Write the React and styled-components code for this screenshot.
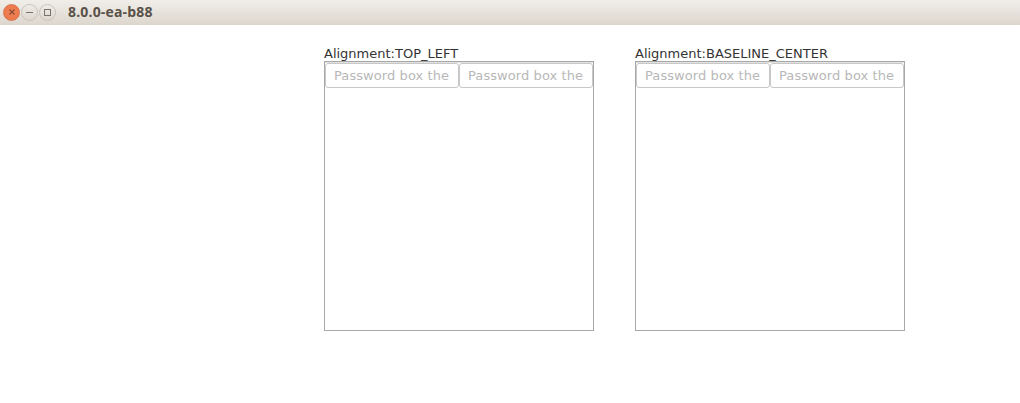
import React from "react";
import styled, { createGlobalStyle } from "styled-components";

const Global = createGlobalStyle`
  html, body {
    margin: 0;
    padding: 0;
    background: #fff;
    overflow: hidden;
  }
`;

const Window = styled.div`
  width: 1020px;
  height: 403px;
  display: flex;
  flex-direction: column;
  background: #fff;
`;

const TitleBar = styled.div`
  height: 25px;
  display: flex;
  align-items: center;
  padding-left: 3px;
  background: linear-gradient(#f1eeea, #dcd6cd);
  box-sizing: border-box;
`;

const Controls = styled.div`
  display: flex;
  gap: 1px;
  width: 65px;
  margin-bottom: 1px;
`;

const WinButton = styled.div`
  width: 17px;
  height: 17px;
  border-radius: 50%;
  display: flex;
  align-items: center;
  justify-content: center;
  background: ${(p) =>
    p.$close
      ? "radial-gradient(circle at 50% 45%, #ef8358, #ec7446)"
      : "linear-gradient(#efece8, #dcd7cf)"};
  border: 1px solid ${(p) => (p.$close ? "#d5774f" : "#c9c3ba")};
  box-sizing: border-box;
`;

const Title = styled.span`
  font-family: "Open Sans", sans-serif;
  font-weight: bold;
  font-size: 14px;
  letter-spacing: 0.17px;
  color: #5a5148;
  margin-bottom: 2px;
`;

const Content = styled.div`
  display: flex;
  gap: 41px;
  padding: 21px 0 0 324px;
`;

const Column = styled.div`
  display: flex;
  flex-direction: column;
`;

const Label = styled.div`
  font-family: "DejaVu Sans", sans-serif;
  font-size: 13px;
  line-height: 15px;
  color: #333;
  white-space: nowrap;
`;

const Pane = styled.div`
  width: 270px;
  height: 270px;
  box-sizing: border-box;
  border: 1px solid #a8a8a8;
  box-shadow: inset 0 1px 0 #e2e2e2;
  display: flex;
  align-items: flex-start;
  padding-top: 1px;
`;

const PasswordBox = styled.div`
  width: 134px;
  height: 25px;
  flex: none;
  box-sizing: border-box;
  border: 1px solid #c8c8c8;
  border-radius: 3px;
  padding-left: 8px;
  font-family: "DejaVu Sans", sans-serif;
  font-size: 13px;
  letter-spacing: 0.08px;
  line-height: 23px;
  color: #b8b8b8;
  white-space: nowrap;
  overflow: hidden;
`;

const columns = ["TOP_LEFT", "BASELINE_CENTER"];

export default function App() {
  return (
    <Window>
      <Global />
      <TitleBar>
        <Controls>
          <WinButton $close>
            <svg width="8" height="8" viewBox="0 0 8 8">
              <path d="M1.5 1.5 L6.5 6.5 M6.5 1.5 L1.5 6.5" stroke="#8a4a2e" strokeWidth="1.2" />
            </svg>
          </WinButton>
          <WinButton>
            <svg width="9" height="9" viewBox="0 0 9 9">
              <path d="M1 4.5 H8" stroke="#7a736a" strokeWidth="1" />
            </svg>
          </WinButton>
          <WinButton>
            <svg width="9" height="9" viewBox="0 0 9 9">
              <rect x="1.5" y="1.5" width="6" height="6" fill="none" stroke="#7a736a" strokeWidth="1" />
            </svg>
          </WinButton>
        </Controls>
        <Title>8.0.0-ea-b88</Title>
      </TitleBar>
      <Content>
        {columns.map((name) => (
          <Column key={name}>
            <Label>Alignment:{name}</Label>
            <Pane>
              <PasswordBox>Password box the</PasswordBox>
              <PasswordBox>Password box the</PasswordBox>
            </Pane>
          </Column>
        ))}
      </Content>
    </Window>
  );
}
